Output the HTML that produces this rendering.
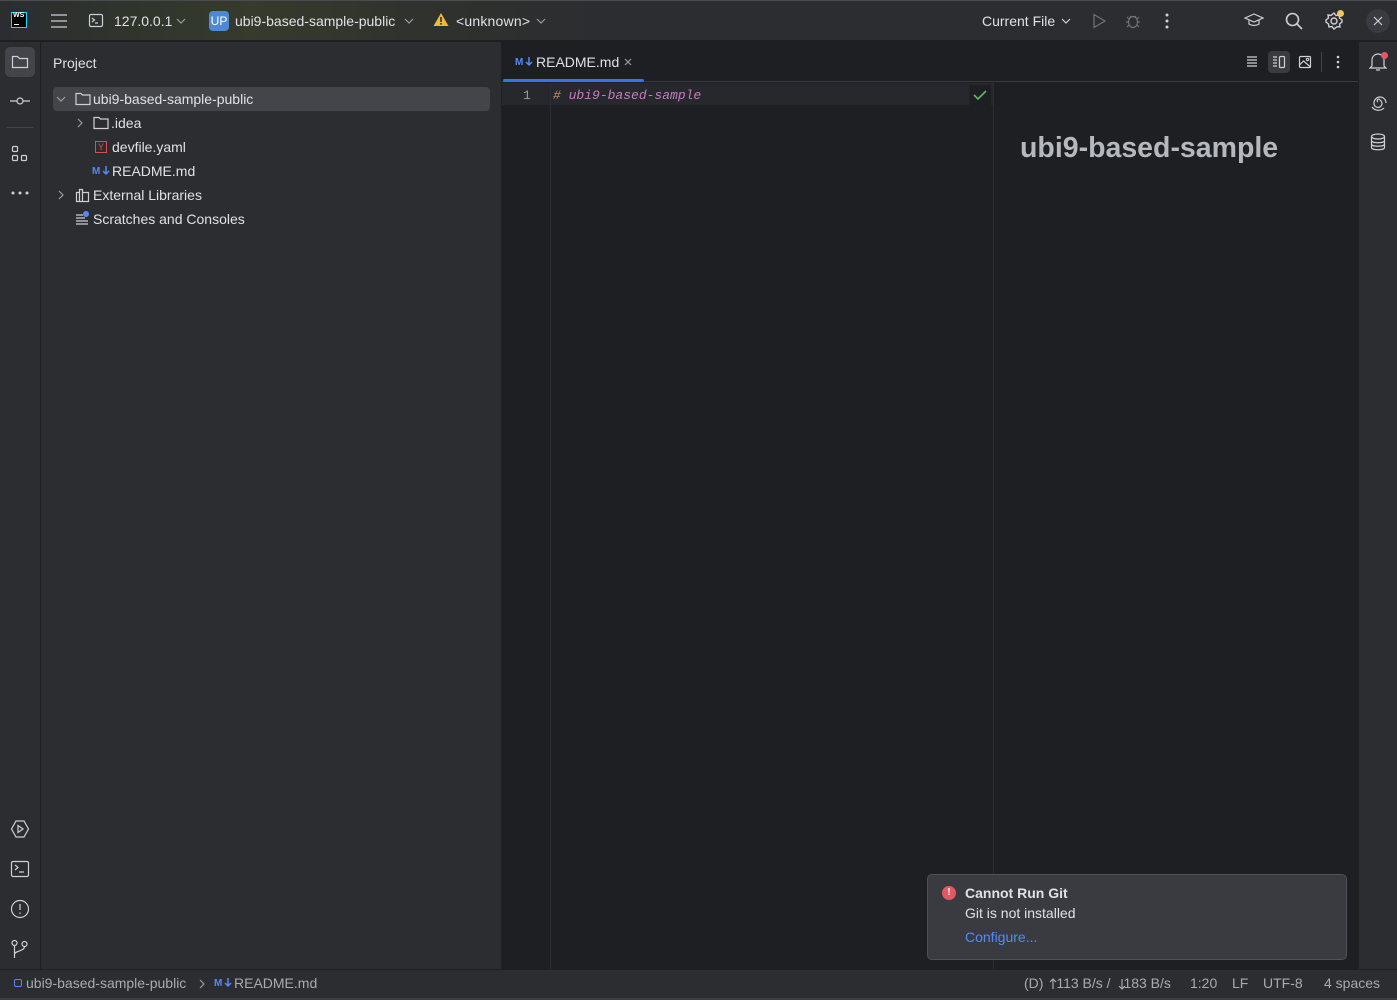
<!DOCTYPE html>
<html><head><meta charset="utf-8"><style>
*{margin:0;padding:0;box-sizing:border-box}
body{width:1397px;height:1000px;overflow:hidden;background:#1e1f22;font-family:"Liberation Sans",sans-serif;font-size:13px;color:#dfe1e5;position:relative}
.a{position:absolute}
svg{position:absolute;fill:none;stroke:#ced0d6;stroke-width:1.2}
svg.c{stroke:#9a9da3;stroke-width:1.2}
.t{position:absolute;white-space:nowrap}
.m{position:absolute;font-size:10px;font-weight:bold;color:#548af7}
</style></head><body>
<!-- title bar -->
<div class="a" style="left:0;top:0;width:1397px;height:41px;background:linear-gradient(90deg,#2b2d30 0,#30362c 150px,#363b2c 250px,#2f322d 420px,#2b2d30 600px);border-top:1px solid #4a4c50;border-bottom:1px solid #1e1f22"></div>
<div class="a" style="left:11px;top:12px;width:16px;height:16px;background:#000;border:1px solid #21d7ff"></div>
<div class="t" style="left:13px;top:12px;font-size:7px;font-weight:bold;color:#fff">WS</div>
<div class="a" style="left:14px;top:24px;width:5px;height:1px;background:#fff"></div>
<svg style="left:50px;top:13px" width="18" height="16"><path d="M1 2h16M1 8h16M1 14h16"/></svg>
<svg style="left:88px;top:13px" width="16" height="16"><rect x="1.5" y="1.5" width="13" height="12" rx="1.5"/><path d="M4 5l2.5 2L4 9M7 10h3"/></svg>
<div class="t" style="left:114px;top:13px;font-size:14px">127.0.0.1</div>
<svg class="c" style="left:176px;top:18px" width="10" height="6"><path d="M1 1l4 4 4-4"/></svg>
<div class="a" style="left:209px;top:11px;width:20px;height:20px;border-radius:4px;background:#4d8ad6;color:#fff;font-size:12px;text-align:center;line-height:20px">UP</div>
<div class="t" style="left:235px;top:13px;font-size:14px">ubi9-based-sample-public</div>
<svg class="c" style="left:404px;top:18px" width="10" height="6"><path d="M1 1l4 4 4-4"/></svg>
<svg style="left:433px;top:12px;stroke:none;fill:#f0b73c" width="16" height="15"><path d="M8 1l7.5 13H.5z"/><path d="M7.2 5h1.6v5H7.2zM7.2 11h1.6v1.6H7.2z" fill="#2f322d"/></svg>
<div class="t" style="left:456px;top:13px;font-size:14px;letter-spacing:0.2px">&lt;unknown&gt;</div>
<svg class="c" style="left:536px;top:18px" width="10" height="6"><path d="M1 1l4 4 4-4"/></svg>
<div class="t" style="left:982px;top:13px;font-size:14px">Current File</div>
<svg class="c" style="left:1061px;top:18px;stroke:#ced0d6" width="10" height="6"><path d="M1 1l4 4 4-4"/></svg>
<svg style="left:1091px;top:13px;stroke:#6f737a" width="16" height="16"><path d="M3 1.5l11 6.5-11 6.5z"/></svg>
<svg style="left:1125px;top:12px;stroke:#6f737a" width="16" height="18"><ellipse cx="8" cy="10" rx="4.5" ry="5.5"/><path d="M5 4l1.5 1.5M11 4l-1.5 1.5M1 10h3M12 10h3M2 5l2 2M14 5l-2 2M2 15l2-2M14 15l-2-2"/></svg>
<svg style="left:1164px;top:13px;stroke:none;fill:#ced0d6" width="6" height="16"><circle cx="3" cy="2" r="1.5"/><circle cx="3" cy="8" r="1.5"/><circle cx="3" cy="14" r="1.5"/></svg>
<svg style="left:1244px;top:12px" width="20" height="16"><path d="M1 6l9-4 9 4-9 4zM5 8v4c3 2 7 2 10 0V8"/></svg>
<svg style="left:1285px;top:12px;stroke-width:1.6" width="18" height="18"><circle cx="7.5" cy="7.5" r="6"/><path d="M12 12l5 5"/></svg>
<svg style="left:1324px;top:11px;stroke-width:1.4" width="20" height="20"><circle cx="10" cy="10" r="3"/><path d="M10 2l2 2.5 3-.5.5 3L18 9v2l-2.5 2 .5 3-3-.3L10 18l-2-2.5-3 .5-.5-3L2 11V9l2.5-2L4 4l3 .5z"/></svg>
<div class="a" style="left:1337px;top:10px;width:7px;height:7px;border-radius:50%;background:#f2c55c"></div>
<div class="a" style="left:1366px;top:9px;width:24px;height:24px;border-radius:50%;background:#393b40"></div>
<svg style="left:1373px;top:16px" width="10" height="10"><path d="M1 1l8 8M9 1l-8 8"/></svg>
<!-- left stripe -->
<div class="a" style="left:0;top:42px;width:41px;height:927px;background:#2b2d30;border-right:1px solid #1e1f22"></div>
<div class="a" style="left:5px;top:47px;width:30px;height:30px;border-radius:5px;background:#43454a"></div>
<svg style="left:11px;top:54px" width="18" height="16"><path d="M1.5 2.5h5l2 2h8v9h-15z"/></svg>
<svg style="left:9px;top:95px" width="22" height="12"><circle cx="11" cy="6" r="3"/><path d="M1 6h7M14 6h7"/></svg>
<div class="a" style="left:7px;top:127px;width:26px;height:1px;background:#43454a"></div>
<svg style="left:11px;top:145px" width="18" height="18"><rect x="1.5" y="1.5" width="5" height="5" rx="1"/><rect x="1.5" y="10.5" width="5" height="5" rx="1"/><rect x="10.5" y="10.5" width="5" height="5" rx="1"/></svg>
<svg style="left:11px;top:191px;stroke:none;fill:#ced0d6" width="18" height="4"><circle cx="2" cy="2" r="1.5"/><circle cx="9" cy="2" r="1.5"/><circle cx="16" cy="2" r="1.5"/></svg>
<svg style="left:10px;top:819px" width="20" height="20"><path d="M6 2h8l4.5 8L14 18H6L1.5 10z"/><path d="M8 6.5l5 3.5-5 3.5z"/></svg>
<svg style="left:10px;top:860px" width="20" height="18"><rect x="1.5" y="1.5" width="17" height="15" rx="1.5"/><path d="M5 5l3 2.5L5 10M9 12h5"/></svg>
<svg style="left:10px;top:899px" width="20" height="20"><circle cx="10" cy="10" r="8.5"/><path d="M10 5v6M10 13.5v1.5"/></svg>
<svg style="left:10px;top:939px" width="20" height="20"><circle cx="4.5" cy="4" r="2.5"/><circle cx="14.5" cy="5" r="2.5"/><path d="M4.5 6.5V19M14.5 7.5c0 5-10 4-10 8"/></svg>
<!-- project panel -->
<div class="a" style="left:41px;top:42px;width:461px;height:927px;background:#2b2d30;border-right:1px solid #1e1f22"></div>
<div class="t" style="left:53px;top:55px;font-size:14px">Project</div>
<div class="a" style="left:53px;top:87px;width:437px;height:24px;border-radius:4px;background:#43454a"></div>
<svg class="c" style="left:56px;top:96px" width="10" height="6"><path d="M1 1l4 4 4-4"/></svg>
<svg style="left:75px;top:92px" width="16" height="14"><path d="M1 1.5h5l1.5 1.5h7.5v9.5h-14z"/></svg>
<div class="t" style="left:93px;top:91px;font-size:14px">ubi9-based-sample-public</div>
<svg class="c" style="left:77px;top:118px" width="6" height="10"><path d="M1 1l4 4-4 4"/></svg>
<svg style="left:93px;top:116px" width="16" height="14"><path d="M1 1.5h5l1.5 1.5h7.5v9.5h-14z"/></svg>
<div class="t" style="left:111px;top:115px;font-size:14px">.idea</div>
<div class="a" style="left:95px;top:141px;width:12px;height:12px;border:1px solid #d9504f;color:#d9504f;font-size:9px;line-height:10px;text-align:center">Y</div>
<div class="t" style="left:112px;top:139px;font-size:14px">devfile.yaml</div>
<div class="m" style="left:92px;top:166px">M</div>
<svg style="left:102px;top:166px;stroke:#548af7;stroke-width:1.5" width="8" height="10"><path d="M4 0v8M1 5l3 3 3-3"/></svg>
<div class="t" style="left:112px;top:163px;font-size:14px">README.md</div>
<svg class="c" style="left:58px;top:190px" width="6" height="10"><path d="M1 1l4 4-4 4"/></svg>
<svg style="left:75px;top:188px" width="16" height="15"><path d="M1.5 4.5h3v9h-3zM4.5 1.5h3v12h-3zM7.5 4.5h6v9h-6z"/></svg>
<div class="t" style="left:93px;top:187px;font-size:14px">External Libraries</div>
<svg style="left:75px;top:212px" width="16" height="14"><path d="M1 3h7M1 6h9M1 9h12M1 12h12"/></svg>
<div class="a" style="left:83px;top:211px;width:6px;height:6px;border-radius:50%;background:#548af7"></div>
<div class="t" style="left:93px;top:211px;font-size:14px">Scratches and Consoles</div>
<!-- editor -->
<div class="a" style="left:502px;top:42px;width:856px;height:40px;border-bottom:1px solid #393b40;background:#1e1f22"></div>
<div class="m" style="left:515px;top:57px">M</div>
<svg style="left:525px;top:57px;stroke:#548af7;stroke-width:1.5" width="8" height="10"><path d="M4 0v8M1 5l3 3 3-3"/></svg>
<div class="t" style="left:536px;top:54px;font-size:14px">README.md</div>
<svg class="c" style="left:624px;top:58px" width="8" height="8"><path d="M1 1l6 6M7 1l-6 6"/></svg>
<div class="a" style="left:503px;top:79px;width:141px;height:3px;background:#3574f0;border-radius:2px"></div>
<svg style="left:1246px;top:55px" width="12" height="12"><path d="M1 2h10M1 5h10M1 8h10M1 11h10"/></svg>
<div class="a" style="left:1268px;top:51px;width:22px;height:22px;border-radius:4px;background:#393b40"></div>
<svg style="left:1272px;top:55px" width="14" height="14"><path d="M1 2h4M1 5h4M1 8h4M1 11h4"/><rect x="7.5" y="1.5" width="5" height="11" rx="1"/></svg>
<svg style="left:1298px;top:55px" width="14" height="14"><rect x="1.5" y="1.5" width="11" height="11" rx="1"/><path d="M1.5 10l4-4 7 6"/><circle cx="9.5" cy="4.5" r="1.2"/></svg>
<div class="a" style="left:1321px;top:52px;width:1px;height:20px;background:#43454a"></div>
<svg style="left:1335px;top:55px;stroke:none;fill:#ced0d6" width="6" height="14"><circle cx="3" cy="2" r="1.3"/><circle cx="3" cy="7" r="1.3"/><circle cx="3" cy="12" r="1.3"/></svg>
<div class="a" style="left:502px;top:83px;width:491px;height:22px;background:#26282e"></div>
<div class="a" style="left:550px;top:83px;width:1px;height:886px;background:#2b2d30"></div>
<div class="a" style="left:993px;top:83px;width:1px;height:886px;background:#2b2d30"></div>
<div class="a" style="left:969px;top:85px;width:22px;height:20px;background:#1e1f22"></div>
<div class="t" style="left:523px;top:88px;font-family:'Liberation Mono',monospace;font-size:13px;color:#9a9da3">1</div>
<div class="t" style="left:553px;top:88px;font-family:'Liberation Mono',monospace;font-size:13px;font-style:italic;color:#c77dbb"><span style="color:#cf8e6d">#</span> ubi9-based-sample</div>
<svg style="left:973px;top:89px;stroke:#5fb865;stroke-width:1.6" width="14" height="12"><path d="M1 6l4 4 8-8"/></svg>
<div class="t" style="left:1020px;top:132px;font-size:28.5px;font-weight:bold;color:#b4b8bf">ubi9-based-sample</div>
<!-- right stripe -->
<div class="a" style="left:1358px;top:42px;width:39px;height:927px;background:#2b2d30;border-left:1px solid #1e1f22"></div>
<svg style="left:1369px;top:52px" width="18" height="20"><path d="M3 14V8a6 6 0 0 1 12 0v6l2 2H1zM7 18h4"/></svg>
<div class="a" style="left:1381px;top:52px;width:7px;height:7px;border-radius:50%;background:#e55765"></div>
<svg style="left:1369px;top:93px" width="18" height="18"><path d="M9 9a1.5 1.5 0 1 1 2-2 4 4 0 1 1-6 3 6 6 0 1 1 12 0M3 14a8 8 0 0 0 12 1"/></svg>
<svg style="left:1370px;top:133px" width="16" height="18"><ellipse cx="8" cy="3.5" rx="6.5" ry="2.5"/><path d="M1.5 3.5v11c0 3 13 3 13 0v-11M1.5 7.5c0 3 13 3 13 0M1.5 11c0 3 13 3 13 0"/></svg>
<!-- notification -->
<div class="a" style="left:927px;top:874px;width:420px;height:86px;background:#393b40;border:1px solid #4e5157;border-radius:5px"></div>
<div class="a" style="left:942px;top:886px;width:14px;height:14px;border-radius:50%;background:#e55765;color:#fff;font-size:10px;font-weight:bold;text-align:center;line-height:14px">!</div>
<div class="t" style="left:965px;top:885px;font-size:14px;font-weight:bold">Cannot Run Git</div>
<div class="t" style="left:965px;top:905px;font-size:14px">Git is not installed</div>
<div class="t" style="left:965px;top:929px;font-size:14px;color:#548af7">Configure...</div>
<!-- status bar -->
<div class="a" style="left:0;top:969px;width:1397px;height:31px;background:#2b2d30;border-top:1px solid #1e1f22;border-bottom:2px solid #3c3f41"></div>
<div class="a" style="left:14px;top:979px;width:8px;height:8px;border:1.5px solid #548af7;border-radius:2px"></div>
<div class="t" style="left:26px;top:975px;font-size:14px;color:#a8abb0">ubi9-based-sample-public</div>
<svg class="c" style="left:199px;top:979px" width="6" height="10"><path d="M1 1l4 4-4 4"/></svg>
<div class="m" style="left:214px;top:978px">M</div>
<svg style="left:224px;top:978px;stroke:#548af7;stroke-width:1.5" width="8" height="10"><path d="M4 0v8M1 5l3 3 3-3"/></svg>
<div class="t" style="left:234px;top:975px;font-size:14px;color:#a8abb0">README.md</div>
<div class="t" style="left:1024px;top:975px;font-size:14px;color:#a8abb0">(D) <span style="display:inline-block;width:9px"></span>113 B/s / <span style="display:inline-block;width:9px"></span>183 B/s</div>
<svg style="left:1049px;top:978px;stroke:#a8abb0" width="8" height="12"><path d="M4 11V1M1 4l3-3 3 3"/></svg>
<svg style="left:1118px;top:978px;stroke:#a8abb0" width="8" height="12"><path d="M4 1v10M1 8l3 3 3-3"/></svg>
<div class="t" style="left:1190px;top:975px;font-size:14px;color:#a8abb0">1:20</div>
<div class="t" style="left:1232px;top:975px;font-size:14px;color:#a8abb0">LF</div>
<div class="t" style="left:1263px;top:975px;font-size:14px;color:#a8abb0">UTF-8</div>
<div class="t" style="left:1324px;top:975px;font-size:14px;color:#a8abb0">4 spaces</div>
</body></html>
